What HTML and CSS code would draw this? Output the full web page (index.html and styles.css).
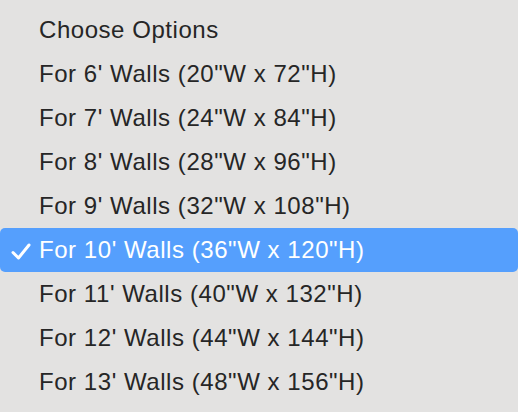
FILE: index.html
```html
<!DOCTYPE html>
<html lang="en">
<head>
    <meta charset="UTF-8">
    <title>Choose Options</title>
    <link rel="stylesheet" href="styles.css">
</head>
<body>

<ul class="menu">
    <li class="option">Choose Options</li>
    <li class="option">For 6' Walls (20"W x 72"H)</li>
    <li class="option">For 7' Walls (24"W x 84"H)</li>
    <li class="option">For 8' Walls (28"W x 96"H)</li>
    <li class="option">For 9' Walls (32"W x 108"H)</li>
    <li class="option selected">
        <svg class="check" width="20" height="17" viewBox="0 0 20 17">
            <path d="M2 9.5 L7.5 15 L18 2" fill="none" stroke="#ffffff" stroke-width="3" stroke-linecap="round" stroke-linejoin="round"/>
        </svg>
        For 10' Walls (36"W x 120"H)
    </li>
    <li class="option">For 11' Walls (40"W x 132"H)</li>
    <li class="option">For 12' Walls (44"W x 144"H)</li>
    <li class="option">For 13' Walls (48"W x 156"H)</li>
</ul>

</body>
</html>
```

FILE: styles.css
```css
body {
    margin: 0;
    background-color: #e3e2e1;
    font-family: "Liberation Sans", Arial, sans-serif;
}
.menu {
    list-style: none;
    margin: 0;
    padding: 8px 0 0 0;
}
.option {
    position: relative;
    height: 44px;
    line-height: 44px;
    padding-left: 39px;
    font-size: 24px;
    letter-spacing: 0.55px;
    color: #262626;
    white-space: nowrap;
}
.option.selected {
    background-color: #559ffd;
    color: #ffffff;
    border-radius: 5px;
}
.check {
    position: absolute;
    left: 11px;
    top: 15px;
}
```
